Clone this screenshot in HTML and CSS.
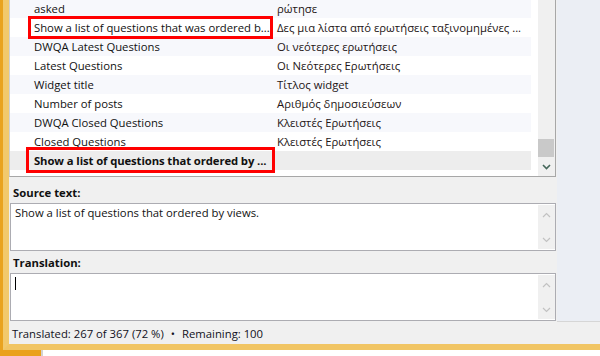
FILE: index.html
```html
<!doctype html>
<html>
	<head>
		<meta charset="utf-8"/>
		<title>Poedit</title>
		<link rel="stylesheet" href="styles.css">
	</head>
	<body>
		<div class="desk">
			<div class="frame">
				<div class="main">
					<div class="panel">
						<div class="list">
							<div class="rows">
								<div class="row"><span class="ico"></span><span class="src">asked</span><span class="trn">ρώτησε</span></div>
								<div class="row"><span class="ico"></span><span class="src">Show a list of questions that was ordered b...</span><span class="trn">Δες μια λίστα από ερωτήσεις ταξινομημένες ...</span></div>
								<div class="row"><span class="ico"></span><span class="src">DWQA Latest Questions</span><span class="trn">Οι νεότερες ερωτήσεις</span></div>
								<div class="row"><span class="ico"></span><span class="src">Latest Questions</span><span class="trn">Οι Νεότερες Ερωτήσεις</span></div>
								<div class="row"><span class="ico"></span><span class="src">Widget title</span><span class="trn">Τίτλος widget</span></div>
								<div class="row"><span class="ico"></span><span class="src">Number of posts</span><span class="trn">Αριθμός δημοσιεύσεων</span></div>
								<div class="row"><span class="ico"></span><span class="src">DWQA Closed Questions</span><span class="trn">Κλειστές Ερωτήσεις</span></div>
								<div class="row"><span class="ico"></span><span class="src">Closed Questions</span><span class="trn">Κλειστές Ερωτήσεις</span></div>
								<div class="row selected"><span class="ico"></span><span class="src">Show a list of questions that ordered by ...</span><span class="trn"></span></div>
							</div>
							<div class="vscroll list-scroll">
								<div class="thumb"></div>
								<div class="arrow">
									<svg width="9" height="6" viewBox="0 0 9 6"><polyline points="1,1 4.5,4.5 8,1" fill="none" stroke="#45675a" stroke-width="1.6"/></svg>
								</div>
							</div>
							<div class="mark mark-one"></div>
							<div class="mark mark-two"></div>
						</div>
						<div class="label label-src">Source text:</div>
						<div class="box">
							<div class="box-text">Show a list of questions that ordered by views.</div>
							<div class="vscroll box-scroll">
								<svg width="9" height="6" viewBox="0 0 9 6"><polyline points="1,5 4.5,1.5 8,5" fill="none" stroke="#c2c2c2" stroke-width="1.2"/></svg>
								<svg width="9" height="6" viewBox="0 0 9 6"><polyline points="1,1 4.5,4.5 8,1" fill="none" stroke="#c2c2c2" stroke-width="1.2"/></svg>
							</div>
						</div>
						<div class="label label-trn">Translation:</div>
						<div class="box">
							<div class="box-text"><span class="caret"></span></div>
							<div class="vscroll box-scroll">
								<svg width="9" height="6" viewBox="0 0 9 6"><polyline points="1,5 4.5,1.5 8,5" fill="none" stroke="#c2c2c2" stroke-width="1.2"/></svg>
								<svg width="9" height="6" viewBox="0 0 9 6"><polyline points="1,1 4.5,4.5 8,1" fill="none" stroke="#c2c2c2" stroke-width="1.2"/></svg>
							</div>
						</div>
					</div>
					<div class="sidebar"></div>
				</div>
				<div class="status">Translated: 267 of 367 (72 %)<span class="dot">•</span>Remaining: 100</div>
			</div>
			<div class="under">
				<div class="under-orange"></div>
				<div class="under-line"></div>
				<div class="under-white"></div>
			</div>
		</div>
	</body>
</html>
```

FILE: styles.css
```css
*{margin:0;padding:0;box-sizing:border-box;}
body{
	width:600px;
	height:356px;
	overflow:hidden;
	font-family:"Open Sans","Noto Sans",sans-serif;
	font-size:11.3px;
	color:#111;
}
.desk{
	display:flex;
	flex-direction:column;
	height:356px;
	background:#e9a31f;
}
.frame{
	margin-left:3px;
	height:350px;
	border-left:6px solid #f2c96c;
	border-bottom:6px solid #f1c564;
	background:#f0f0f0;
	display:flex;
	flex-direction:column;
}
.main{
	display:flex;
	height:322px;
}
.panel{
	width:548px;
	display:flex;
	flex-direction:column;
}
.sidebar{
	flex:1;
	background:#ebeef4;
	border-bottom:1px solid #d6d6d6;
}

/* liste */
.list{
	position:relative;
	display:flex;
	width:547px;
	height:177px;
	background:#fff;
	border-left:1px solid #d0d0d0;
	border-right:1px solid #a7a7a7;
	border-bottom:1px solid #a7a7a7;
}
.rows{
	width:521px;
	margin-top:-1px;
	margin-right:7px;
}
.row{
	display:grid;
	grid-template-columns:21px 243px 1fr;
	height:19px;
	line-height:19px;
	white-space:nowrap;
	overflow:hidden;
}
.row:nth-child(odd){
	background:#f7f8fc;
}
.row.selected{
	background:#ededed;
	font-weight:700;
	letter-spacing:-0.1px;
}
.src{
	padding-left:3px;
	overflow:hidden;
}
.trn{
	padding-left:3px;
	color:#241515;
	overflow:hidden;
}
.vscroll{
	width:17px;
	background:#f0f0f0;
	display:flex;
	flex-direction:column;
	align-items:center;
}
.list-scroll{
	justify-content:flex-end;
}
.thumb{
	width:16px;
	height:18px;
	margin-right:1px;
	background:#c9c9c9;
}
.arrow{
	height:19px;
	display:flex;
	align-items:center;
	justify-content:center;
}
.mark{
	position:absolute;
	border:3px solid #f00;
}
.mark-one{
	left:18px;
	top:16px;
	width:245px;
	height:23px;
}
.mark-two{
	left:16px;
	top:147px;
	width:249px;
	height:26px;
}

/* zones de texte */
.label{
	font-weight:700;
	line-height:15px;
	padding-left:4px;
}
.label-src{
	height:26px;
	padding-top:8px;
}
.label-trn{
	height:22px;
	padding-top:4px;
}
.box{
	display:flex;
	width:546px;
	height:48px;
	margin-left:1px;
	background:#fff;
	border:1px solid #acacb2;
}
.box-text{
	flex:1;
	padding:1px 0 0 4px;
	line-height:15px;
}
.caret{
	display:inline-block;
	width:1px;
	height:13px;
	margin-top:2px;
	background:#000;
	vertical-align:top;
}
.box-scroll{
	margin:1px 0;
	justify-content:space-between;
	padding:7px 0 6px;
}

/* barre d'etat */
.status{
	height:22px;
	line-height:23px;
	padding-left:3px;
	color:#111122;
}
.dot{
	padding:0 7px;
}
.under{
	display:flex;
	height:6px;
}
.under-orange{
	width:41px;
	background:#eaa11c;
}
.under-line{
	width:2px;
	background:#d2d2d2;
}
.under-white{
	flex:1;
	background:#fff;
}
```
